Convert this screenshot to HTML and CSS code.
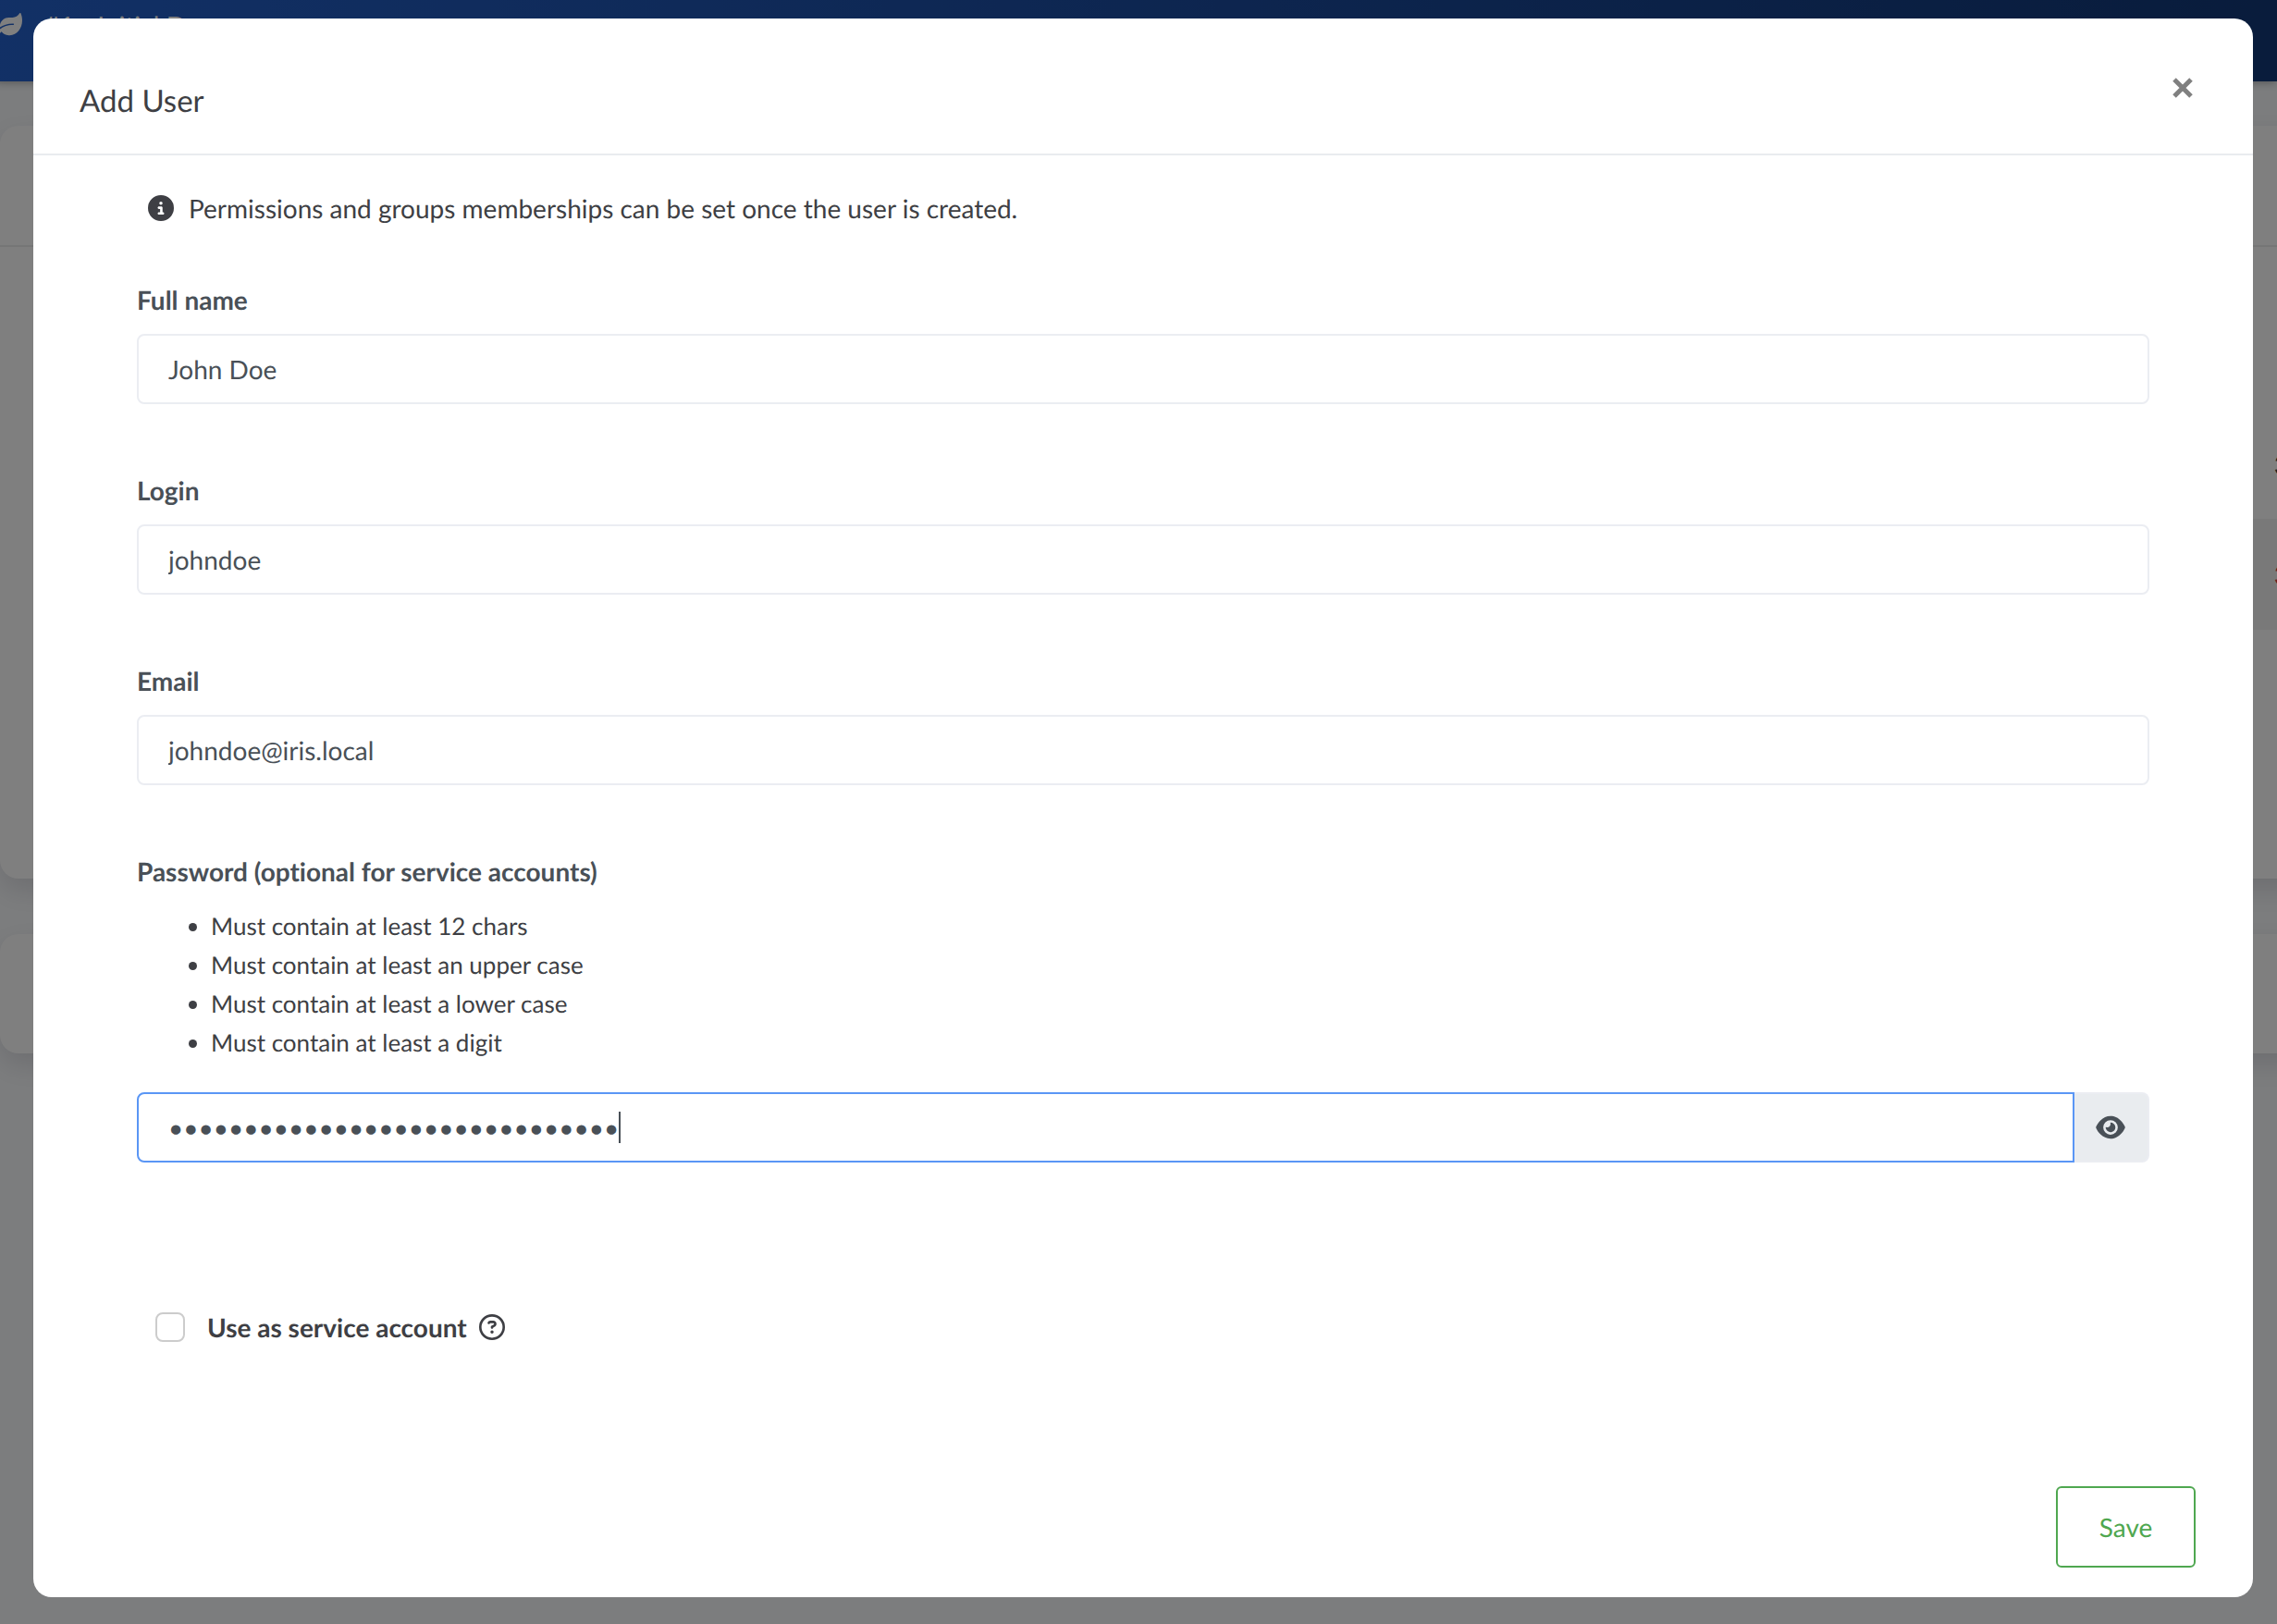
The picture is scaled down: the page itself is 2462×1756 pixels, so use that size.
FILE: index.html
```html
<!DOCTYPE html>
<html lang="en">
<head>
<meta charset="utf-8">
<title>Add User</title>
<link rel="stylesheet" href="styles.css">
</head>
<body>
<div class="page" aria-hidden="true">
  <header class="navbar">
    <svg class="navbar-icon" viewBox="0 0 576 512"><path d="M546.2 9.7c-5.6-12.5-21.6-13-28.3-1.2C486.9 62.4 431.4 96 368 96h-80C182 96 96 182 96 288c0 7 .8 13.7 1.5 20.5C161.3 262.8 253.4 224 384 224c8.8 0 16 7.2 16 16s-7.2 16-16 16C132.6 256 26 410.1 2.4 468c-6.6 16.3 1.2 34.9 17.5 41.6 16.4 6.8 35-1.1 41.8-17.3 1.5-3.6 20.9-47.9 71.9-90.6 32.4 43.9 94 85.8 174.9 77.2C465.5 467.5 576 326.7 576 154.3c0-50.2-10.8-102.2-29.8-144.6z"/></svg>
    <span class="navbar-case">#1 - Initial Demo</span>
  </header>
  <main class="cards">
    <section class="card card-users">
      <div class="card-head"></div>
      <div class="card-row card-row-first">3</div>
      <div class="card-row card-row-alt">3</div>
    </section>
    <section class="card card-small"></section>
  </main>
</div>
<div class="overlay">
  <div class="modal" role="dialog" aria-modal="true" aria-labelledby="modal-title">
    <header class="modal-header">
      <h1 class="modal-title" id="modal-title">Add User</h1>
      <button class="close" type="button" aria-label="Close">
        <svg class="close-icon" viewBox="0 0 22 22"><path d="M2 2 20 20M20 2 2 20"/></svg>
      </button>
    </header>
    <form class="modal-body">
      <p class="info">
        <svg class="icon" viewBox="0 0 512 512"><path d="M256 512A256 256 0 1 0 256 0a256 256 0 1 0 0 512zM216 336h24V272H216c-13.300 0-24-10.700-24-24s10.700-24 24-24h48c13.300 0 24 10.700 24 24v88h8c13.300 0 24 10.700 24 24s-10.700 24-24 24H216c-13.300 0-24-10.700-24-24s10.700-24 24-24zm40-208a32 32 0 1 1 0 64 32 32 0 1 1 0-64z"/></svg>
        Permissions and groups memberships can be set once the user is created.
      </p>
      <div class="field">
        <label class="label" for="fullname">Full name</label>
        <input class="input" id="fullname" type="text" value="John Doe">
      </div>
      <div class="field">
        <label class="label" for="login">Login</label>
        <input class="input" id="login" type="text" value="johndoe">
      </div>
      <div class="field">
        <label class="label" for="email">Email</label>
        <input class="input" id="email" type="text" value="johndoe@iris.local">
      </div>
      <div class="field">
        <label class="label" for="password">Password (optional for service accounts)</label>
        <ul class="rules">
          <li>Must contain at least 12 chars</li>
          <li>Must contain at least an upper case</li>
          <li>Must contain at least a lower case</li>
          <li>Must contain at least a digit</li>
        </ul>
        <div class="input-group">
          <input class="input input-password" id="password" type="password" value="correcthorsebatterystaple12345">
          <span class="caret"></span>
          <button class="reveal" type="button" aria-label="Show password">
            <svg class="reveal-icon" viewBox="0 0 576 512"><path d="M288 32c-80.8 0-145.5 36.8-192.6 80.6C48.6 156 17.3 208 2.5 243.700c-3.300 7.900-3.300 16.700 0 24.600C17.300 304 48.600 356 95.400 399.400C142.500 443.200 207.200 480 288 480s145.500-36.800 192.600-80.600c46.800-43.500 78.100-95.400 93-131.100c3.300-7.900 3.300-16.700 0-24.600c-14.900-35.700-46.200-87.700-93-131.100C433.500 68.800 368.800 32 288 32zM144 256a144 144 0 1 1 288 0 144 144 0 1 1 -288 0zm144-64c0 35.300-28.700 64-64 64c-7.100 0-13.900-1.200-20.300-3.300c-5.500-1.800-11.900 1.600-11.700 7.400c.3 6.900 1.300 13.800 3.200 20.700c13.700 51.200 66.400 81.600 117.600 67.900s81.600-66.400 67.900-117.600c-11.100-41.500-47.800-69.400-88.600-71.100c-5.800-.2-9.200 6.100-7.400 11.700c2.100 6.400 3.300 13.200 3.300 20.300z"/></svg>
          </button>
        </div>
      </div>
      <div class="check">
        <input class="checkbox" id="service" type="checkbox">
        <label class="check-label" for="service">Use as service account</label>
        <svg class="icon" viewBox="0 0 512 512"><path d="M464 256A208 208 0 1 0 48 256a208 208 0 1 0 416 0zM0 256a256 256 0 1 1 512 0A256 256 0 1 1 0 256zm169.800-90.700c7.900-22.300 29.100-37.300 52.800-37.300h58.300c34.900 0 63.100 28.300 63.100 63.100c0 22.600-12.100 43.500-31.700 54.800L280 264.400c-.2 13-10.900 23.600-24 23.600c-13.300 0-24-10.700-24-24V250.500c0-8.600 4.600-16.500 12.100-20.800l44.300-25.400c4.700-2.700 7.600-7.700 7.600-13.100c0-8.400-6.800-15.100-15.100-15.100H222.600c-3.400 0-6.400 2.100-7.500 5.300l-.4 1.200c-4.400 12.500-18.200 19-30.600 14.600s-19-18.200-14.600-30.600l.4-1.200zM224 352a32 32 0 1 1 64 0 32 32 0 1 1 -64 0z"/></svg>
      </div>
      <div class="actions">
        <button class="save" type="button">Save</button>
      </div>
    </form>
  </div>
</div>
</body>
</html>
```

FILE: styles.css
```css
* { box-sizing: border-box; }

body {
  margin: 0;
  font: 28px/42px Lato, "Open Sans", sans-serif;
  font-variant-ligatures: none;
  text-rendering: geometricPrecision;
  color: #3e3f44;
  background: #f9fbfd;
}

button, input { font: inherit; text-rendering: inherit; }

/* Page behind the dialog */
.page { min-height: 100vh; overflow: hidden; }

.navbar {
  position: relative;
  display: flex;
  align-items: flex-start;
  gap: 24px;
  height: 88px;
  padding-top: 14px;
  margin-left: -5px;
  color: #fff;
  background: linear-gradient(to right, #2461cc, #123878);
  box-shadow: 0 0 10px rgba(0, 0, 0, .4);
}

.navbar-icon { width: 29px; height: 26px; fill: #fff; }
.navbar-case { line-height: 26px; font-size: 28px; }

.cards { display: grid; gap: 60px; padding-top: 48px; margin-right: -40px; }

.card {
  border-radius: 20px;
  background: #fff;
  box-shadow: 0 12px 30px rgba(69, 65, 78, .16);
}

.card-users { height: 814px; }
.card-small { height: 129px; }
.card-head { height: 131px; border-bottom: 2px solid #ebecec; }

.card-row {
  display: flex;
  justify-content: flex-end;
  align-items: center;
  height: 120px;
  margin-left: 40px;
  padding-right: 27px;
}

.card-row-first { height: 294px; align-items: flex-end; padding-bottom: 38px; }
.card-row-alt { background: #f2f2f2; color: #d9363e; }

/* Dialog */
.overlay {
  position: absolute;
  inset: 0;
  padding: 20px 26px 28px 36px;
  background: rgba(0, 0, 0, .5);
}

.modal { background: #fff; border-radius: 20px; }

.modal-header {
  display: flex;
  justify-content: space-between;
  align-items: flex-start;
  padding: 40px 50px 30px;
  border-bottom: 2px solid #e9ecef;
}

.modal-title {
  margin: 25px 0 3px;
  font-size: 33px;
  line-height: 48px;
  font-weight: 400;
}

.close {
  display: flex;
  padding: 24px 15px;
  border: 0;
  background: none;
  color: #808080;
}

.close-icon {
  width: 22px;
  height: 22px;
  fill: none;
  stroke: currentColor;
  stroke-width: 5;
}

.modal-body { padding: 36px 62px 32px 112px; }

.info { display: flex; align-items: center; gap: 16px; margin: 0 0 60px 12px; }

.icon { width: 28px; height: 28px; flex: none; fill: currentColor; }

.field { margin: 0 50px 75px 0; }

.label {
  display: block;
  margin-bottom: 19px;
  line-height: 36px;
  font-weight: 700;
  color: #495057;
}

.input {
  display: block;
  width: 100%;
  height: 76px;
  padding: 0 32px;
  border: 2px solid #ebedf2;
  border-radius: 8px;
  color: #495057;
  background: #fff;
  outline: 0;
}

.rules { margin: 0; padding: 1px 0 33px 80px; font-size: 26px; }

.input-group { position: relative; display: flex; }

.input-password {
  flex: 1;
  border-color: #5a96f5;
  border-radius: 8px 0 0 8px;
}

/* Text cursor at the end of the typed password */
.caret {
  position: absolute;
  left: 521px;
  top: 21px;
  width: 2px;
  height: 34px;
  background: #495057;
}

.reveal {
  display: flex;
  align-items: center;
  justify-content: center;
  width: 81px;
  padding: 0 2px 0 0;
  border: 2px solid #ebedf2;
  border-left: 0;
  border-radius: 0 8px 8px 0;
  background: #e9ecef;
  color: #495057;
}

.reveal-icon { width: 32px; height: 28px; fill: currentColor; }

.check { display: flex; align-items: center; margin: 157px 0 0 20px; }

.checkbox {
  appearance: none;
  width: 32px;
  height: 32px;
  margin: 0 24px 0 0;
  border: 2px solid #ccc;
  border-radius: 8px;
  background: #fff;
}

.check-label { margin-right: 13px; font-weight: 700; }

.actions { display: flex; justify-content: flex-end; margin-top: 151px; }

.save {
  width: 151px;
  height: 88px;
  border: 2px solid #4fa750;
  border-radius: 6px;
  color: #4fa750;
  background: #fff;
}
```
